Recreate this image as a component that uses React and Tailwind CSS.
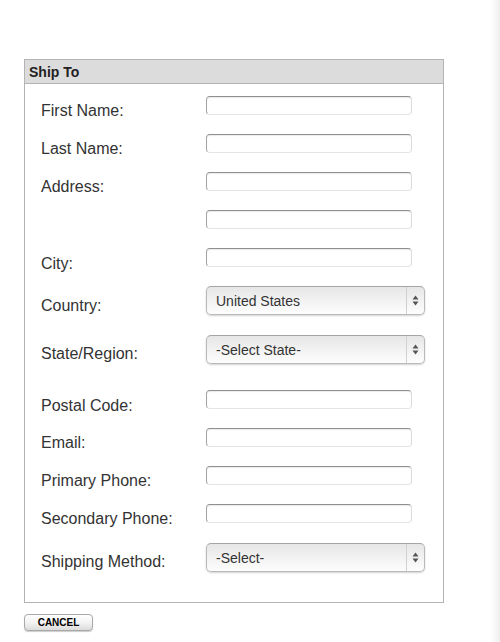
import React from "react";

const font = { fontFamily: '"Liberation Sans", Arial, Helvetica, sans-serif' };

function TextInput() {
  return (
    <div className="w-[206px] h-[19px] rounded-[4px] border border-t-[#8f8f8f] border-l-[#a3a3a3] border-r-[#dcdcdc] border-b-[#e4e4e4] bg-white shadow-[inset_0_1px_1px_rgba(0,0,0,0.08)]" />
  );
}

function Select({ value }) {
  return (
    <div className="w-[219px] h-[29px] rounded-[5px] border border-[#b9b9b9] border-t-[#a5a5a5] bg-gradient-to-b from-[#e6e6e6] via-[#f2f2f2] to-[#fdfdfd] shadow-[0_1px_2px_rgba(0,0,0,0.18)] flex items-stretch">
      <div className="flex-1 flex items-center pl-[9px] pt-[1px] text-[14px] text-[#333]">{value}</div>
      <div className="w-[18px] border-l border-[#d0d0d0] flex items-center justify-center">
        <svg width="7" height="11" viewBox="0 0 7 11">
          <path d="M3.5 0.5 L6.5 4.5 L0.5 4.5 Z" fill="#555" />
          <path d="M3.5 10.5 L6.5 6.5 L0.5 6.5 Z" fill="#555" />
        </svg>
      </div>
    </div>
  );
}

function Row({ label, h, pt, children }) {
  return (
    <div className={`flex items-start ${h}`}>
      <div className={`w-[165px] ${pt} text-[16px] leading-[20px] text-[#333] whitespace-nowrap`}>{label}</div>
      <div>{children}</div>
    </div>
  );
}

export default function App() {
  return (
    <div className="w-[500px] h-[642px] flex bg-white" style={font}>
      <div className="flex-1 pt-[59px] pl-[24px]">
        <div className="w-[420px] border border-[#b4b4b4]">
          <div className="h-[24px] bg-[#dcdcdc] border-b border-[#b4b4b4] flex items-center pl-[4px] pt-[1px] text-[14px] font-bold text-[#222]">
            Ship To
          </div>
          <div className="pt-[12px] pl-[16px] pb-[30px]">
            <Row label="First Name:" h="h-[38px]" pt="pt-[5px]"><TextInput /></Row>
            <Row label="Last Name:" h="h-[38px]" pt="pt-[5px]"><TextInput /></Row>
            <Row label="Address:" h="h-[38px]" pt="pt-[5px]"><TextInput /></Row>
            <Row label="" h="h-[38px]" pt="pt-[5px]"><TextInput /></Row>
            <Row label="City:" h="h-[38px]" pt="pt-[6px]"><TextInput /></Row>
            <Row label="Country:" h="h-[49px]" pt="pt-[10px]"><Select value="United States" /></Row>
            <Row label="State/Region:" h="h-[55px]" pt="pt-[9px]"><Select value="-Select State-" /></Row>
            <Row label="Postal Code:" h="h-[38px]" pt="pt-[6px]"><TextInput /></Row>
            <Row label="Email:" h="h-[38px]" pt="pt-[5px]"><TextInput /></Row>
            <Row label="Primary Phone:" h="h-[38px]" pt="pt-[5px]"><TextInput /></Row>
            <Row label="Secondary Phone:" h="h-[39px]" pt="pt-[5px]"><TextInput /></Row>
            <Row label="Shipping Method:" h="h-[29px]" pt="pt-[9px]"><Select value="-Select-" /></Row>
          </div>
        </div>
        <div className="mt-[11px]">
          <button className="w-[69px] h-[17px] rounded-[4px] border border-[#a8a8a8] bg-gradient-to-b from-white via-[#f3f3f3] to-[#dcdcdc] shadow-[0_1px_1px_rgba(0,0,0,0.2)] text-[10px] font-bold text-black leading-none flex items-center justify-center">
            CANCEL
          </button>
        </div>
      </div>
      <div className="w-[10px] h-full bg-gradient-to-r from-white to-[#efefef]" />
    </div>
  );
}
